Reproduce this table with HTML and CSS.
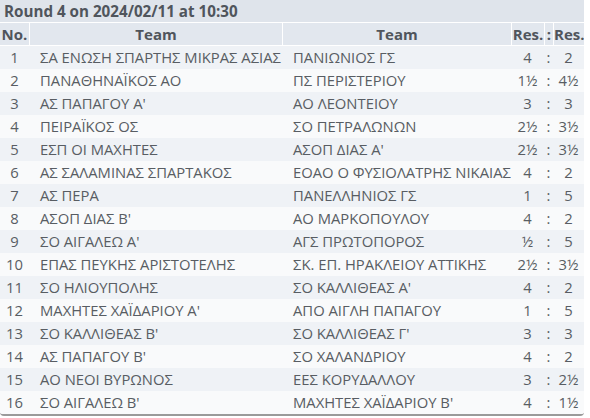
FILE: index.html
```html
<!DOCTYPE html>
<html>
<head>
<meta charset="utf-8">
<link rel="stylesheet" href="styles.css">
</head>
<body>
<div class="panel">
  <div class="title">Round 4 on 2024/02/11 at 10:30</div>
  <table class="pairings">
    <colgroup>
      <col class="c-no"><col class="c-team1"><col class="c-team2"><col class="c-res1"><col class="c-sep"><col class="c-res2">
    </colgroup>
    <thead>
      <tr><th>No.</th><th>Team</th><th>Team</th><th>Res.</th><th>:</th><th>Res.</th></tr>
    </thead>
    <tbody>
      <tr><td class="no">1</td><td class="team">ΣΑ ΕΝΩΣΗ ΣΠΑΡΤΗΣ ΜΙΚΡΑΣ ΑΣΙΑΣ</td><td class="team t2">ΠΑΝΙΩΝΙΟΣ ΓΣ</td><td class="res">4</td><td class="sep">:</td><td class="res">2</td></tr>
      <tr><td class="no">2</td><td class="team">ΠΑΝΑΘΗΝΑΪΚΟΣ ΑΟ</td><td class="team t2">ΠΣ ΠΕΡΙΣΤΕΡΙΟΥ</td><td class="res">1½</td><td class="sep">:</td><td class="res">4½</td></tr>
      <tr><td class="no">3</td><td class="team">ΑΣ ΠΑΠΑΓΟΥ Α'</td><td class="team t2">ΑΟ ΛΕΟΝΤΕΙΟΥ</td><td class="res">3</td><td class="sep">:</td><td class="res">3</td></tr>
      <tr><td class="no">4</td><td class="team">ΠΕΙΡΑΪΚΟΣ ΟΣ</td><td class="team t2">ΣΟ ΠΕΤΡΑΛΩΝΩΝ</td><td class="res">2½</td><td class="sep">:</td><td class="res">3½</td></tr>
      <tr><td class="no">5</td><td class="team">ΕΣΠ ΟΙ ΜΑΧΗΤΕΣ</td><td class="team t2">ΑΣΟΠ ΔΙΑΣ Α'</td><td class="res">2½</td><td class="sep">:</td><td class="res">3½</td></tr>
      <tr><td class="no">6</td><td class="team">ΑΣ ΣΑΛΑΜΙΝΑΣ ΣΠΑΡΤΑΚΟΣ</td><td class="team t2">ΕΟΑΟ Ο ΦΥΣΙΟΛΑΤΡΗΣ ΝΙΚΑΙΑΣ</td><td class="res">4</td><td class="sep">:</td><td class="res">2</td></tr>
      <tr><td class="no">7</td><td class="team">ΑΣ ΠΕΡΑ</td><td class="team t2">ΠΑΝΕΛΛΗΝΙΟΣ ΓΣ</td><td class="res">1</td><td class="sep">:</td><td class="res">5</td></tr>
      <tr><td class="no">8</td><td class="team">ΑΣΟΠ ΔΙΑΣ Β'</td><td class="team t2">ΑΟ ΜΑΡΚΟΠΟΥΛΟΥ</td><td class="res">4</td><td class="sep">:</td><td class="res">2</td></tr>
      <tr><td class="no">9</td><td class="team">ΣΟ ΑΙΓΑΛΕΩ Α'</td><td class="team t2">ΑΓΣ ΠΡΩΤΟΠΟΡΟΣ</td><td class="res">½</td><td class="sep">:</td><td class="res">5</td></tr>
      <tr><td class="no">10</td><td class="team">ΕΠΑΣ ΠΕΥΚΗΣ ΑΡΙΣΤΟΤΕΛΗΣ</td><td class="team t2">ΣΚ. ΕΠ. ΗΡΑΚΛΕΙΟΥ ΑΤΤΙΚΗΣ</td><td class="res">2½</td><td class="sep">:</td><td class="res">3½</td></tr>
      <tr><td class="no">11</td><td class="team">ΣΟ ΗΛΙΟΥΠΟΛΗΣ</td><td class="team t2">ΣΟ ΚΑΛΛΙΘΕΑΣ Α'</td><td class="res">4</td><td class="sep">:</td><td class="res">2</td></tr>
      <tr><td class="no">12</td><td class="team">ΜΑΧΗΤΕΣ ΧΑΪΔΑΡΙΟΥ Α'</td><td class="team t2">ΑΠΟ ΑΙΓΛΗ ΠΑΠΑΓΟΥ</td><td class="res">1</td><td class="sep">:</td><td class="res">5</td></tr>
      <tr><td class="no">13</td><td class="team">ΣΟ ΚΑΛΛΙΘΕΑΣ Β'</td><td class="team t2">ΣΟ ΚΑΛΛΙΘΕΑΣ Γ'</td><td class="res">3</td><td class="sep">:</td><td class="res">3</td></tr>
      <tr><td class="no">14</td><td class="team">ΑΣ ΠΑΠΑΓΟΥ Β'</td><td class="team t2">ΣΟ ΧΑΛΑΝΔΡΙΟΥ</td><td class="res">4</td><td class="sep">:</td><td class="res">2</td></tr>
      <tr><td class="no">15</td><td class="team">ΑΟ ΝΕΟΙ ΒΥΡΩΝΟΣ</td><td class="team t2">ΕΕΣ ΚΟΡΥΔΑΛΛΟΥ</td><td class="res">3</td><td class="sep">:</td><td class="res">2½</td></tr>
      <tr><td class="no">16</td><td class="team">ΣΟ ΑΙΓΑΛΕΩ Β'</td><td class="team t2">ΜΑΧΗΤΕΣ ΧΑΪΔΑΡΙΟΥ Β'</td><td class="res">4</td><td class="sep">:</td><td class="res">1½</td></tr>
    </tbody>
  </table>
</div>
</body>
</html>
```
FILE: styles.css
```css
html, body {
  margin: 0;
  padding: 0;
  background: #ffffff;
}
body {
  font-family: "Open Sans", "Noto Sans", sans-serif;
  font-size: 14.8px;
  color: #585d63;
}
.panel {
  width: 584px;
  border-bottom: 2px solid #9a9a9a;
  border-radius: 0 0 4px 4px;
  overflow: hidden;
}
.title {
  height: 22px;
  line-height: 22px;
  background: #dfe4eb;
  border-bottom: 1px solid #ffffff;
  padding-left: 4px;
  font-weight: bold;
  font-size: 15.2px;
  color: #50555c;
  white-space: nowrap;
}
.pairings {
  width: 584px;
  table-layout: fixed;
  border-collapse: separate;
  border-spacing: 0;
}
.c-no { width: 29px; }
.c-team1 { width: 253px; }
.c-team2 { width: 229px; }
.c-res1 { width: 33px; }
.c-sep { width: 9px; }
.c-res2 { width: 31px; }

.pairings th {
  height: 22px;
  padding: 0;
  background: #e2e7ee;
  border-left: 1px solid #ffffff;
  border-bottom: 1px solid #ffffff;
  font-weight: bold;
  font-size: 15px;
  color: #50555c;
  text-align: center;
  white-space: nowrap;
  overflow: hidden;
}
.pairings th:first-child {
  border-left: none;
}
.pairings td {
  height: 23px;
  padding: 0;
  white-space: nowrap;
  overflow: hidden;
  line-height: 23px;
}
.pairings tbody tr:nth-child(odd) td {
  background: #eff2f6;
}
.pairings tbody tr:nth-child(even) td {
  background: #f9fafb;
}
.no {
  text-align: center;
}
.team {
  padding-left: 11px !important;
}
.res, .sep {
  text-align: center;
}
```
